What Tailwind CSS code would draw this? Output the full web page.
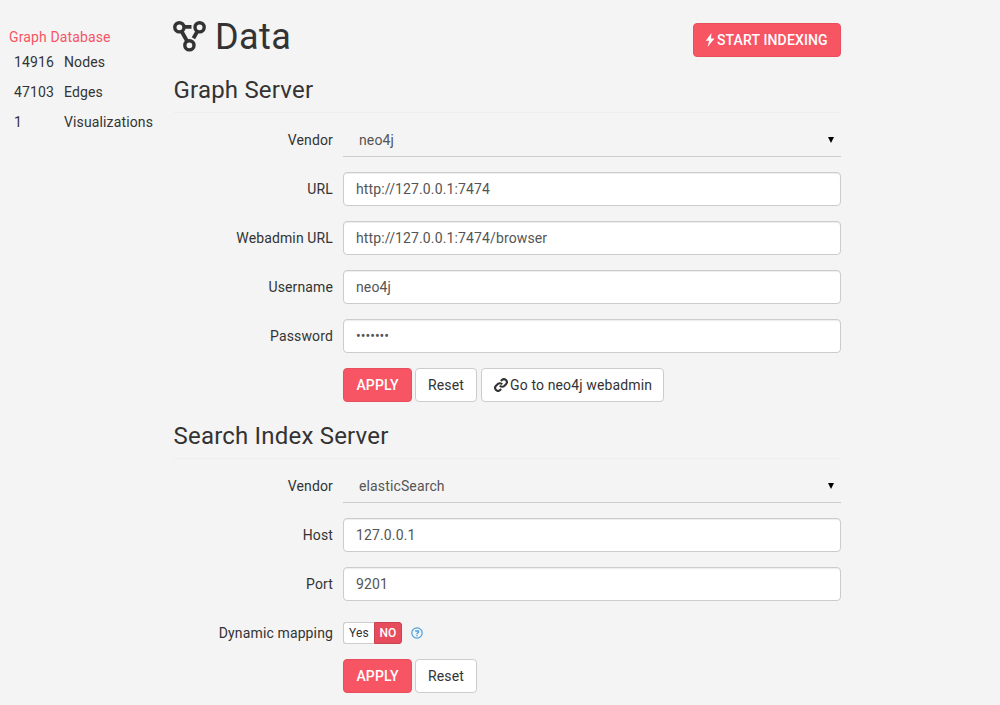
<!DOCTYPE html>
<html lang="en">
<head>
<meta charset="utf-8">
<title>Data</title>
<script src="https://cdn.jsdelivr.net/npm/@tailwindcss/browser@4"></script>
</head>
<body class="bg-[#f4f4f4] font-['Roboto',sans-serif] text-[14px] leading-5 tracking-[0.13px] text-[#333]">
<div class="flex h-[705px] overflow-hidden">
  <aside class="w-[173px] shrink-0 pt-[27px] pl-[9px]">
    <div class="text-[#f75464]">Graph Database</div>
    <dl class="grid grid-cols-[50px_1fr] gap-y-[10px] pt-[5px] pl-[5px]">
      <dt>14916</dt><dd>Nodes</dd>
      <dt>47103</dt><dd>Edges</dd>
      <dt>1</dt><dd>Visualizations</dd>
    </dl>
  </aside>
  <main class="w-[668px] shrink-0">
    <header class="flex h-[73px] items-start justify-between">
      <h1 class="flex items-start pt-[17px] text-[36px] leading-[40px] tracking-[0.4px]">
        <svg class="mt-[3px] mr-[9px] h-[32px] w-[33px]" viewBox="0 0 33 32" fill="none" stroke="#333" stroke-width="3.4"><circle cx="6.400" cy="7.300" r="4.600"/><circle cx="26.600" cy="7.300" r="4.600"/><circle cx="16.400" cy="25.300" r="4.600"/><path d="M11 6.900h7.500M8.700 11.500l5.300 9.500M24.300 11.500l-3.900 6.700" stroke-width="3.800"/></svg>
        Data
      </h1>
      <button class="mt-[23px] flex h-[34px] w-[148px] items-center rounded-[4px] border border-[#e84f5e] bg-[#f75464] pl-[11px] font-medium text-white"><svg class="mr-[2px] h-[14px] w-[10px]" viewBox="0 0 10 14" fill="#fff"><path d="M6.500 0 .8 7.700h3.400L2.500 14 9.500 5.500H6z"/></svg>START INDEXING</button>
    </header>
    <section>
      <h2 class="ml-px h-[40px] border-b border-[#eee] pt-[4px] text-[24px] leading-[26px] tracking-[0.2px]"><span class="-ml-[0.5px]">Graph Server</span></h2>
      <form class="grid grid-cols-[160px_498px] gap-x-[10px] gap-y-[15px] pt-[10px]">
        <label class="pt-[7px] text-right">Vendor</label>
        <div class="flex h-[34px] items-center justify-between border-b border-[#ccc] pr-[7px] pl-[16px] text-[#555]">neo4j<svg class="h-[6px] w-[6px]" viewBox="0 0 6 6"><path d="M0 0h6L3 6z"/></svg></div>
        <label class="pt-[7px] text-right">URL</label>
        <div class="h-[34px] rounded-[4px] border border-[#ccc] bg-white px-[12px] py-[6px] text-[#555] shadow-[inset_0_1px_1px_rgba(0,0,0,0.075)]">http://127.0.0.1:7474</div>
        <label class="pt-[7px] text-right">Webadmin URL</label>
        <div class="h-[34px] rounded-[4px] border border-[#ccc] bg-white px-[12px] py-[6px] text-[#555] shadow-[inset_0_1px_1px_rgba(0,0,0,0.075)]">http://127.0.0.1:7474/browser</div>
        <label class="pt-[7px] text-right">Username</label>
        <div class="h-[34px] rounded-[4px] border border-[#ccc] bg-white px-[12px] py-[6px] text-[#555] shadow-[inset_0_1px_1px_rgba(0,0,0,0.075)]">neo4j</div>
        <label class="pt-[7px] text-right">Password</label>
        <div class="h-[34px] rounded-[4px] border border-[#ccc] bg-white px-[12px] py-[6px] tracking-[0px] text-[#555] shadow-[inset_0_1px_1px_rgba(0,0,0,0.075)]">•••••••</div>
        <div class="col-start-2 flex">
          <button type="button" class="mr-[3px] h-[34px] w-[69px] rounded-[4px] border border-[#e84f5e] bg-[#f75464] font-medium text-white">APPLY</button>
          <button type="button" class="mr-[4px] h-[34px] w-[62px] rounded-[4px] border border-[#ccc] bg-white">Reset</button>
          <button type="button" class="flex h-[34px] w-[183px] items-center rounded-[4px] border border-[#ccc] bg-white pl-[12px]"><svg class="mr-[2px] h-[14px] w-[14px]" viewBox="0 0 24 24" fill="none" stroke="#333" stroke-width="3.600"><path d="M10 13a5 5 0 0 0 7.540.540l3-3a5 5 0 0 0-7.070-7.070l-1.720 1.710M14 11a5 5 0 0 0-7.540-.540l-3 3a5 5 0 0 0 7.070 7.070l1.710-1.710"/></svg>Go to neo4j webadmin</button>
        </div>
      </form>
    </section>
    <section class="pt-[17px]">
      <h2 class="ml-px h-[40px] border-b border-[#eee] pt-[4px] text-[24px] leading-[26px] tracking-[0.2px]"><span class="-ml-[0.5px]">Search Index Server</span></h2>
      <form class="grid grid-cols-[160px_498px] gap-x-[10px] gap-y-[15px] pt-[10px]">
        <label class="pt-[7px] text-right">Vendor</label>
        <div class="flex h-[34px] items-center justify-between border-b border-[#ccc] pr-[7px] pl-[16px] text-[#555]">elasticSearch<svg class="h-[6px] w-[6px]" viewBox="0 0 6 6"><path d="M0 0h6L3 6z"/></svg></div>
        <label class="pt-[7px] text-right">Host</label>
        <div class="h-[34px] rounded-[4px] border border-[#ccc] bg-white px-[12px] py-[6px] text-[#555] shadow-[inset_0_1px_1px_rgba(0,0,0,0.075)]">127.0.0.1</div>
        <label class="pt-[7px] text-right">Port</label>
        <div class="h-[34px] rounded-[4px] border border-[#ccc] bg-white px-[12px] py-[6px] text-[#555] shadow-[inset_0_1px_1px_rgba(0,0,0,0.075)]">9201</div>
        <label class="h-[28px] pt-[7px] text-right">Dynamic mapping</label>
        <div class="flex h-[28px] items-start pt-[6px] text-[12px]">
          <button type="button" class="h-[22px] w-[31px] rounded-l-[3px] border border-r-0 border-[#ccc] bg-white">Yes</button>
          <button type="button" class="h-[22px] w-[28px] rounded-r-[3px] border border-[#c94452] bg-[#e64c5c] font-medium text-white">NO</button>
          <svg class="mt-[5px] ml-[9px] h-[12px] w-[12px]" viewBox="0 0 12 12" fill="none" stroke="#4a9fe0"><circle cx="6" cy="6" r="5.200" stroke-width="1.200"/><path d="M4.200 4h3.300v1.200L6 6.500v.8M6 8v1.200" stroke-width="1.300"/></svg>
        </div>
        <div class="col-start-2 flex">
          <button type="button" class="mr-[3px] h-[34px] w-[69px] rounded-[4px] border border-[#e84f5e] bg-[#f75464] font-medium text-white">APPLY</button>
          <button type="button" class="h-[34px] w-[62px] rounded-[4px] border border-[#ccc] bg-white">Reset</button>
        </div>
      </form>
    </section>
  </main>
</div>
</body>
</html>
